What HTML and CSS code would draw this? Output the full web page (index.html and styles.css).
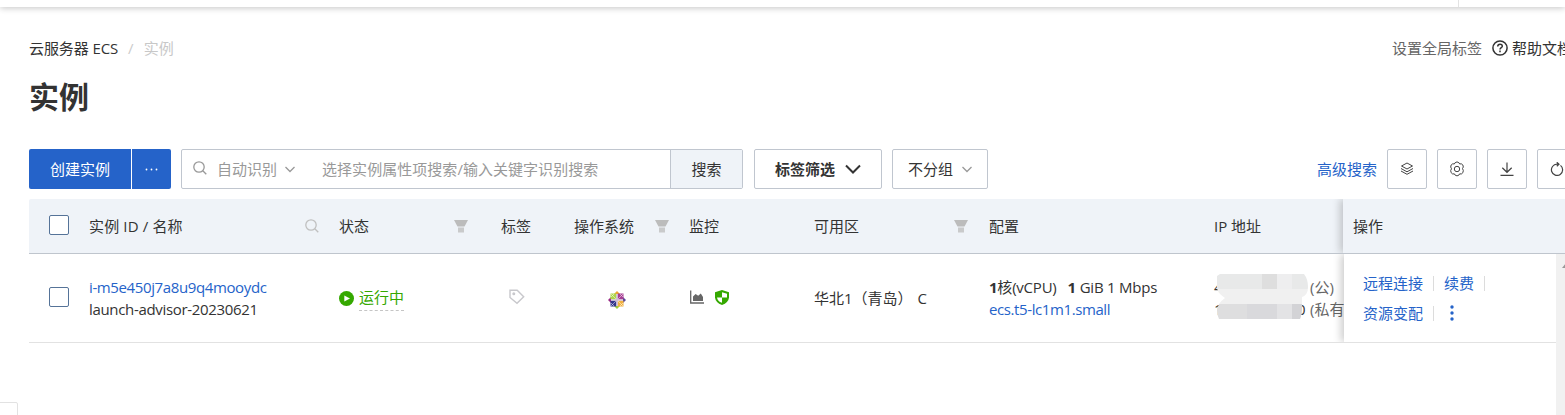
FILE: index.html
```html
<!DOCTYPE html>
<html lang="zh-CN">
<head>
<meta charset="utf-8">
<title>云服务器 ECS - 实例</title>
<link rel="stylesheet" href="styles.css">
</head>
<body>
<svg class="defs" width="0" height="0">
  <symbol id="search" viewBox="0 0 14 14"><circle cx="6" cy="6" r="5.2"/><path d="M9.8 9.8 13.3 13.3"/></symbol>
  <symbol id="chevron" viewBox="0 0 16 10"><path d="M1 1.5 8 8.5 15 1.5"/></symbol>
  <symbol id="chevron-small" viewBox="0 0 10 7"><path d="M.5 1 5 5.5 9.5 1"/></symbol>
  <symbol id="funnel" viewBox="0 0 14 13"><path d="M0 0H14L10.5 6.5H3.5Z"/><path opacity=".75" d="M4 7.5H10V12.5H4Z"/></symbol>
</svg>
<div class="page">
  <div class="topbar"><div class="topbar-tail"></div></div>
  <header class="head">
    <nav class="crumbs"><span class="crumb-main">云服务器 ECS</span><span class="sep">/</span><span class="current">实例</span></nav>
    <div class="help">
      <span class="global-tag">设置全局标签</span>
      <svg width="16" height="16" viewBox="0 0 16 16" fill="none" stroke="#333" stroke-width="1.5"><circle cx="8" cy="8" r="7.1"/><path d="M5.7 6.4C5.8 3.4 10.3 3.5 10.3 6.2 10.3 7.8 8 7.7 8 9.6M8 10.6V12.3"/></svg>
      <span class="docs">帮助文档</span>
    </div>
  </header>
  <h1 class="title">实例</h1>
  <div class="toolbar">
    <button class="btn primary create">创建实例</button>
    <button class="btn primary more"><svg width="13" height="3" viewBox="0 0 13 3" fill="#fff"><circle cx="1.5" cy="1.5" r=".9"/><circle cx="6.5" cy="1.5" r=".9"/><circle cx="11.5" cy="1.5" r=".9"/></svg></button>
    <div class="search">
      <svg class="icon mag" width="14" height="14"><use href="#search"/></svg>
      <span class="auto">自动识别</span>
      <svg class="icon" width="10" height="7"><use href="#chevron-small"/></svg>
      <span class="placeholder">选择实例属性项搜索/输入关键字识别搜索</span>
      <button class="go">搜索</button>
    </div>
    <button class="btn filter">标签筛选<svg class="icon strong" width="16" height="10"><use href="#chevron"/></svg></button>
    <button class="btn group">不分组<svg class="icon" width="10" height="7"><use href="#chevron-small"/></svg></button>
    <div class="tools">
      <a class="advanced">高级搜索</a>
      <button class="btn square"><svg width="14" height="14" viewBox="0 0 14 14" fill="none" stroke="#444"><path d="M7 1 12.5 4 7 7 1.5 4ZM1 6.5 7 9.8 13 6.5M1 9 7 12.3 13 9"/></svg></button>
      <button class="btn square"><svg width="16" height="16" viewBox="0 0 16 16" fill="none" stroke="#444"><path d="M6.1 1.7Q8 .1 9.9 1.7L10.7 3 12.3 2.8Q14.5 3.7 14.3 6L13.5 7.5 14.3 9.5Q14.5 12 12.3 13L10.7 12.8 9.9 14.1Q8 15.7 6.1 14.1L5.3 12.8 3.7 13Q1.5 12 1.7 9.5L2.5 7.8 1.7 6Q1.5 3.7 3.7 2.8L5.3 3Z"/><circle cx="8" cy="8" r="2.7"/></svg></button>
      <button class="btn square"><svg width="14" height="14" viewBox="0 0 14 14" fill="none" stroke="#444" stroke-width="1.2"><path d="M7 .5V10M2.3 5.7 7 10.3 11.7 5.7M.5 13.3H13.5"/></svg></button>
      <button class="btn square"><svg width="14" height="14" viewBox="0 0 14 14" fill="none" stroke="#444" stroke-width="1.2"><path d="M8.8 2.2H7A5.6 5.6 0 1 0 10.5 3.4M6.8.2 9 2.2 6.8 4.3"/></svg></button>
    </div>
  </div>
  <section class="table">
    <div class="row thead">
      <div class="check"><i class="box"></i></div>
      <div class="cell spread id-head">实例 ID / 名称<svg class="icon pale" width="14" height="14"><use href="#search"/></svg></div>
      <div class="cell spread">状态<svg class="funnel" width="14" height="13"><use href="#funnel"/></svg></div>
      <div class="cell">标签</div>
      <div class="cell spread">操作系统<svg class="funnel" width="14" height="13"><use href="#funnel"/></svg></div>
      <div class="cell">监控</div>
      <div class="cell spread">可用区<svg class="funnel" width="14" height="13"><use href="#funnel"/></svg></div>
      <div class="cell">配置</div>
      <div class="cell">IP 地址</div>
      <div class="ops-head">操作</div>
    </div>
    <div class="lower">
      <div class="row tbody">
        <div class="check"><i class="box"></i></div>
        <div class="cell lines"><a class="inst-id">i-m5e450j7a8u9q4mooydc</a><span class="inst-name">launch-advisor-20230621</span></div>
        <div class="cell state"><svg width="15" height="15" viewBox="0 0 15 15"><circle cx="7.5" cy="7.5" r="7.5" fill="#35a800"/><path d="M5.3 4.4 11 7.5 5.3 10.6Z" fill="#fff"/></svg><span class="running">运行中</span></div>
        <div class="cell tag"><svg width="16" height="16" viewBox="0 0 16 16" fill="none" stroke="#c8c8cc" stroke-width="1.4"><path d="M1 1.2H8.2L14.7 7.7 8 14.3 1 8.5Z"/><circle cx="4.8" cy="4.8" r=".8"/></svg></div>
        <div class="cell os"><svg width="18" height="18" viewBox="0 0 18 18">
          <path fill="#eea62c" d="M9 0 12 3H6Z"/><path fill="#58489a" d="M18 9 15 12V6Z"/><path fill="#a0ce3a" d="M9 18 6 15H12Z"/><path fill="#992b85" d="M0 9 3 6V12Z"/>
          <path fill="#add64b" d="M2.5 2.5H8.3V8.3H2.5Z"/><path fill="#a63e93" d="M9.7 2.5H15.5V8.3H9.7Z"/><path fill="#34378c" d="M2.5 9.7H8.3V15.5H2.5Z"/><path fill="#f1b13f" d="M9.7 9.7H15.5V15.5H9.7Z"/>
          <path stroke="#fff" stroke-opacity=".6" stroke-width=".8" fill="none" d="M3 3 15 15M15 3 3 15M3 6 6 3M12 3 15 6M3 12 6 15M12 15 15 12"/><path stroke="#c5aecb" stroke-width="1.2" d="M3 9H15M9 3V15"/></svg></div>
        <div class="cell monitor">
          <svg width="14" height="14" viewBox="0 0 14 14"><path d="M.7.5V13H14" fill="none" stroke="#666" stroke-width="1.3"/><path fill="#666" d="M3 11V6.5L5.6 4 8.2 5.7 10.8 3.5 13 7V11Z"/></svg>
          <svg width="14" height="15" viewBox="0 0 14 15"><path fill="#35a800" d="M7 0 14 2.3V7.4Q13.5 12.5 7 15 .5 12.5 0 7.4V2.3Z"/><path fill="#fff" d="M7 2.2 12 3.8V7.4H7ZM2 7.4H7V12.8Q2.5 11 2 7.4Z"/></svg>
        </div>
        <div class="cell zone">华北1（青岛） C</div>
        <div class="cell lines"><span class="spec"><b>1</b>核(vCPU) &nbsp;&nbsp;<b>1</b> GiB 1 Mbps</span><a class="type">ecs.t5-lc1m1.small</a></div>
        <div class="cell lines ip">
          <span class="ip-line"><em class="ip-a">4</em>(公)</span><span class="ip-line"><em class="ip-b">1</em><em class="ip-c">0</em>(私有)</span>
          <svg class="mosaic" width="91" height="46" viewBox="0 0 91 46"><defs><clipPath id="blot"><path d="M3 0H87Q91 5 91 13T85 23V34Q85 40 83 45H2Q0 41 0 36 1 29 8 24 0 19 0 13V2Z"/></clipPath></defs>
          <g clip-path="url(#blot)"><path fill="#e8e9e9" d="M0 0H91V15H0Z"/><path fill="#dedede" d="M45 0H60V15H45Z"/><path fill="#eeeeef" d="M60 0H75V15H60Z"/><path fill="#f0f0f0" d="M0 15H91V30H0Z"/><path fill="#dededf" d="M0 30H91V45H0Z"/><path fill="#d9d9dc" d="M30 30H60V45H30Z"/><path fill="#e3e3e5" d="M60 30H75V45H60Z"/><path fill="#d3d3d6" d="M75 30H91V45H75Z"/></g></svg>
        </div>
        <div class="ops">
          <div class="ops-line"><a>远程连接</a><a>续费</a></div>
          <div class="ops-line"><a>资源变配</a><svg width="4" height="16" viewBox="0 0 4 16" fill="#2563c9"><circle cx="2" cy="2" r="1.7"/><circle cx="2" cy="8" r="1.7"/><circle cx="2" cy="14" r="1.7"/></svg></div>
        </div>
      </div>
      <div class="scrollbar"><svg width="9" height="6" viewBox="0 0 9 6"><path d="M6 5 10 0V5Z" fill="#999"/></svg></div>
    </div>
  </section>
  <div class="corner"></div>
</div>
</body>
</html>
```
FILE: styles.css
```css
* { box-sizing: border-box; }
body { margin: 0; background: #fff; color: #333; font: 15px/22px "Open Sans", "Noto Sans CJK SC", sans-serif; }
button { font: inherit; color: inherit; margin: 0; padding: 0; cursor: pointer; }
a { color: #2563c9; cursor: pointer; }
svg { display: block; flex: none; }
.defs { position: absolute; }
.page { position: relative; width: 1565px; height: 415px; overflow: hidden; white-space: nowrap; }
.icon { fill: none; stroke: #999; stroke-width: 1.3; }
.icon.strong { stroke: #333; stroke-width: 2; }
.icon.pale { stroke: #c0c0c0; }
.funnel { fill: #bcbcbc; }

.topbar { height: 7px; box-shadow: 0 1px 6px rgba(0, 0, 0, .24); display: flex; justify-content: flex-end; background: #fff; }
.topbar-tail { width: 107px; border-left: 1px solid #e3e3e3; }
.head { height: 51px; padding: 30px 0 0 29px; display: flex; justify-content: space-between; }
.crumbs { display: flex; }
.crumb-main { letter-spacing: -.1px; }
.sep { margin: 0 10px; color: #ccc; }
.current { color: #c8c8c8; }
.help { display: flex; align-items: center; height: 22px; width: 173px; overflow: hidden; }
.help svg { margin: 0 4px 0 10px; }
.global-tag { color: #666; }
.title { margin: 17px 0 30px 29px; height: 44px; font-size: 30px; line-height: 44px; font-weight: 700; }

.toolbar { height: 40px; padding-left: 29px; display: flex; }
.btn { height: 40px; border: 1px solid #c0c6cf; border-radius: 2px; background: #fff; display: flex; align-items: center; justify-content: center; flex: none; }
.primary { background: #2563c9; border: 0; color: #fff; }
.create { width: 102px; border-radius: 2px 0 0 2px; }
.more { width: 39px; margin-left: 1px; border-radius: 0 2px 2px 0; }
.search { width: 562px; flex: none; margin-left: 10px; border: 1px solid #c0c6cf; border-radius: 2px; display: flex; align-items: center; color: #999; }
.mag { margin: -2px 10px 0 11px; }
.auto { margin-right: 8px; }
.placeholder { margin-left: 27px; flex: 1; letter-spacing: .04px; }
.go { width: 72px; height: 38px; border: 0; border-left: 1px solid #c0c6cf; background: #eff3f8; color: #333; flex: none; }
.filter { width: 128px; margin-left: 11px; font-weight: 600; gap: 10px; }
.group { width: 96px; margin-left: 10px; gap: 9px; }
.tools { display: flex; align-items: center; margin-left: 329px; gap: 10px; flex: none; }
.square { width: 40px; }

.table { margin-top: 10px; padding-left: 29px; }
.row { display: grid; grid-template-columns: 60px 250px 162px 73px 115px 125px 175px 225px 129px 222px; }
.thead { height: 55px; background: #eff3f8; border-bottom: 1px solid #bfc5cd; border-radius: 2px 0 0; }
.thead .cell, .ops-head { line-height: 54px; }
.cell { display: flex; align-items: center; min-width: 0; }
.spread { justify-content: space-between; padding-right: 33px; }
.id-head { padding-right: 20px; letter-spacing: .15px; }
.spread:nth-child(5) { padding-right: 20px; }
.spread:nth-child(7) { padding-right: 21px; }
.check { display: flex; align-items: center; padding-left: 20px; }
.box { width: 20px; height: 20px; border: 1px solid #557398; border-radius: 2px; background: #fff; margin-top: -2px; }
.ops-head { padding-left: 10px; background: #eff3f8; box-shadow: -3px 0 8px rgba(0, 0, 0, .2); clip-path: inset(0 0 0 -14px); }
.lower { display: flex; height: 161px; }
.tbody { width: 1527px; height: 89px; grid-template-columns: 60px 250px 162px 73px 115px 125px 175px 225px 129px 213px; border-bottom: 1px solid #e2e2e2; }
.lines { flex-direction: column; align-items: flex-start; justify-content: center; padding-bottom: 1px; }
.inst-id { letter-spacing: -.38px; }
.inst-name { letter-spacing: -.33px; }
.spec { letter-spacing: -.22px; }
.type { letter-spacing: -.4px; }
.state { gap: 5px; }
.running { color: #35a800; border-bottom: 1px dashed #c5c5c5; height: 26px; padding-top: 1px; }
.tag { padding-left: 8px; padding-bottom: 2px; }
.os { padding-left: 34px; padding-top: 3px; }
.monitor { gap: 11px; padding-left: 1px; padding-bottom: 2px; }
.zone { word-spacing: 1px; }
.ip { position: relative; }
.ip-line { display: flex; color: #666; }
.ip-line em { font-style: normal; color: #333; }
.ip-a { width: 96px; }
.ip-b { width: 83px; }
.ip-c { width: 13px; }
.mosaic { position: absolute; left: 3px; top: 20px; }
.ops { position: relative; margin-left: 1px; padding: 14px 0 0 19px; background: #fff; box-shadow: -3px 0 8px rgba(0, 0, 0, .2); clip-path: inset(0 0 0 -14px); }
.ops-line { height: 30px; display: flex; align-items: center; }
.ops-line a { padding-right: 10px; margin-right: 10px; border-right: 1px solid #dcdcdc; line-height: 15px; }
.ops-line svg { margin-left: 6px; }
.scrollbar { width: 9px; background: #f1f1f1; padding-top: 9px; }
.corner { position: absolute; left: -2px; bottom: -2px; width: 20px; height: 15px; border: 1px solid #e2e2e2; border-radius: 2px; }
```
